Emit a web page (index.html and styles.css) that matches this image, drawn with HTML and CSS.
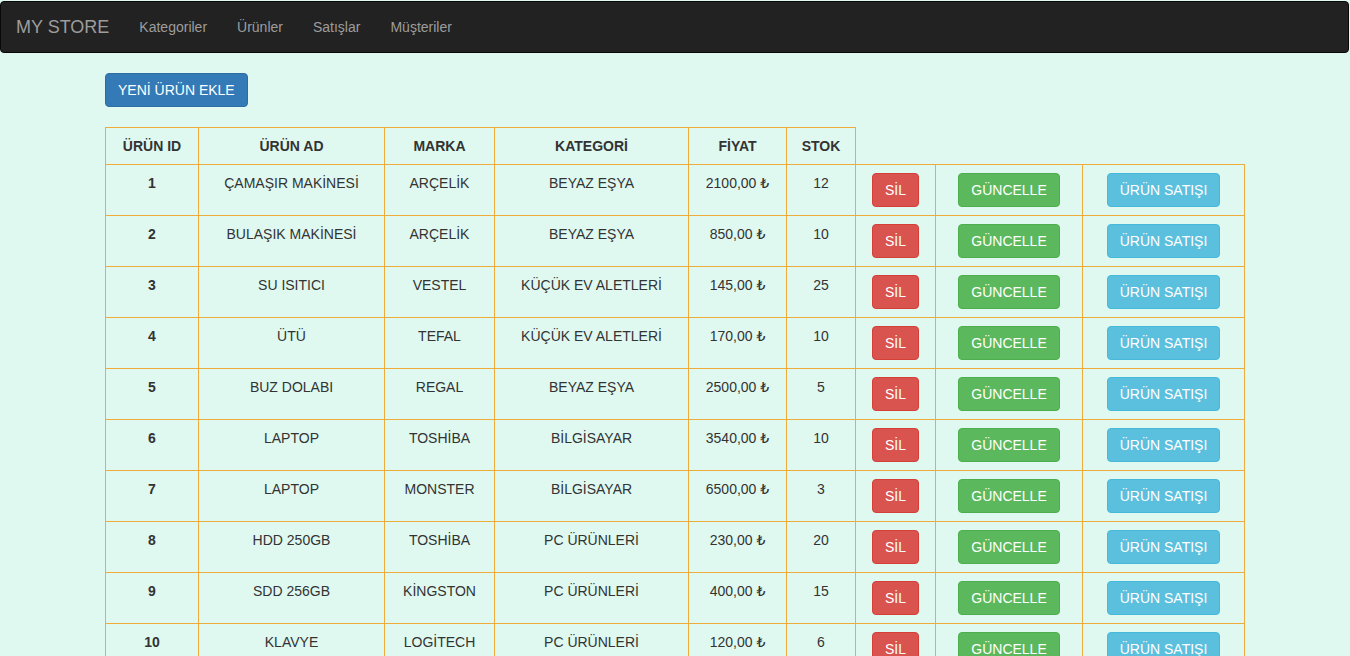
FILE: index.html
```html
<!DOCTYPE html>
<html lang="tr">
<head>
<meta charset="utf-8">
<title>MY STORE</title>
<link rel="stylesheet" href="styles.css">
</head>
<body>
<nav class="navbar">
  <a class="brand" href="#">MY STORE</a>
  <ul class="nav-links">
    <li><a href="#">Kategoriler</a></li>
    <li><a href="#">Ürünler</a></li>
    <li><a href="#">Satışlar</a></li>
    <li><a href="#">Müşteriler</a></li>
  </ul>
</nav>
<main class="container">
  <a class="btn btn-primary" href="#">YENİ ÜRÜN EKLE</a>
  <table class="products">
    <colgroup>
      <col class="c-id"><col class="c-ad"><col class="c-marka"><col class="c-kat"><col class="c-fiyat"><col class="c-stok"><col class="c-sil"><col class="c-gun"><col class="c-sat">
    </colgroup>
    <thead>
      <tr><th>ÜRÜN ID</th><th>ÜRÜN AD</th><th>MARKA</th><th>KATEGORİ</th><th>FİYAT</th><th>STOK</th></tr>
    </thead>
    <tbody>
      <tr><th>1</th><td>ÇAMAŞIR MAKİNESİ</td><td>ARÇELİK</td><td>BEYAZ EŞYA</td><td>2100,00 ₺</td><td>12</td><td><a class="btn btn-danger" href="#">SİL</a></td><td><a class="btn btn-success" href="#">GÜNCELLE</a></td><td><a class="btn btn-info" href="#">ÜRÜN SATIŞI</a></td></tr>
      <tr><th>2</th><td>BULAŞIK MAKİNESİ</td><td>ARÇELİK</td><td>BEYAZ EŞYA</td><td>850,00 ₺</td><td>10</td><td><a class="btn btn-danger" href="#">SİL</a></td><td><a class="btn btn-success" href="#">GÜNCELLE</a></td><td><a class="btn btn-info" href="#">ÜRÜN SATIŞI</a></td></tr>
      <tr><th>3</th><td>SU ISITICI</td><td>VESTEL</td><td>KÜÇÜK EV ALETLERİ</td><td>145,00 ₺</td><td>25</td><td><a class="btn btn-danger" href="#">SİL</a></td><td><a class="btn btn-success" href="#">GÜNCELLE</a></td><td><a class="btn btn-info" href="#">ÜRÜN SATIŞI</a></td></tr>
      <tr><th>4</th><td>ÜTÜ</td><td>TEFAL</td><td>KÜÇÜK EV ALETLERİ</td><td>170,00 ₺</td><td>10</td><td><a class="btn btn-danger" href="#">SİL</a></td><td><a class="btn btn-success" href="#">GÜNCELLE</a></td><td><a class="btn btn-info" href="#">ÜRÜN SATIŞI</a></td></tr>
      <tr><th>5</th><td>BUZ DOLABI</td><td>REGAL</td><td>BEYAZ EŞYA</td><td>2500,00 ₺</td><td>5</td><td><a class="btn btn-danger" href="#">SİL</a></td><td><a class="btn btn-success" href="#">GÜNCELLE</a></td><td><a class="btn btn-info" href="#">ÜRÜN SATIŞI</a></td></tr>
      <tr><th>6</th><td>LAPTOP</td><td>TOSHİBA</td><td>BİLGİSAYAR</td><td>3540,00 ₺</td><td>10</td><td><a class="btn btn-danger" href="#">SİL</a></td><td><a class="btn btn-success" href="#">GÜNCELLE</a></td><td><a class="btn btn-info" href="#">ÜRÜN SATIŞI</a></td></tr>
      <tr><th>7</th><td>LAPTOP</td><td>MONSTER</td><td>BİLGİSAYAR</td><td>6500,00 ₺</td><td>3</td><td><a class="btn btn-danger" href="#">SİL</a></td><td><a class="btn btn-success" href="#">GÜNCELLE</a></td><td><a class="btn btn-info" href="#">ÜRÜN SATIŞI</a></td></tr>
      <tr><th>8</th><td>HDD 250GB</td><td>TOSHİBA</td><td>PC ÜRÜNLERİ</td><td>230,00 ₺</td><td>20</td><td><a class="btn btn-danger" href="#">SİL</a></td><td><a class="btn btn-success" href="#">GÜNCELLE</a></td><td><a class="btn btn-info" href="#">ÜRÜN SATIŞI</a></td></tr>
      <tr><th>9</th><td>SDD 256GB</td><td>KİNGSTON</td><td>PC ÜRÜNLERİ</td><td>400,00 ₺</td><td>15</td><td><a class="btn btn-danger" href="#">SİL</a></td><td><a class="btn btn-success" href="#">GÜNCELLE</a></td><td><a class="btn btn-info" href="#">ÜRÜN SATIŞI</a></td></tr>
      <tr><th>10</th><td>KLAVYE</td><td>LOGİTECH</td><td>PC ÜRÜNLERİ</td><td>120,00 ₺</td><td>6</td><td><a class="btn btn-danger" href="#">SİL</a></td><td><a class="btn btn-success" href="#">GÜNCELLE</a></td><td><a class="btn btn-info" href="#">ÜRÜN SATIŞI</a></td></tr>
    </tbody>
  </table>
</main>
</body>
</html>
```
FILE: styles.css
```css
* { box-sizing: border-box; }
html, body {
  margin: 0;
  background: #dff9f1;
}
body {
  padding-top: 1px;
  font-family: "Liberation Sans", Arial, "DejaVu Sans", sans-serif;
  font-size: 14px;
  line-height: 1.42857143;
  color: #333;
}
a { text-decoration: none; }

.navbar {
  display: flex;
  align-items: stretch;
  height: 52px;
  margin: 0 1px 20px 0;
  padding: 0 15px 0 0;
  background: #222;
  border: 1px solid #080808;
  border-radius: 4px;
}
.brand {
  padding: 15px;
  font-size: 18px;
  line-height: 20px;
  color: #9d9d9d;
}
.nav-links {
  display: flex;
  margin: 0;
  padding: 0;
  list-style: none;
}
.nav-links a {
  display: block;
  padding: 15px;
  line-height: 20px;
  color: #9d9d9d;
}

.container {
  width: 1170px;
  margin: 0 auto;
  padding: 0 15px;
}

.btn {
  display: inline-block;
  padding: 6px 12px;
  font-size: 14px;
  line-height: 1.42857143;
  text-align: center;
  white-space: nowrap;
  color: #fff;
  border: 1px solid transparent;
  border-radius: 4px;
}
.btn-primary { background: #337ab7; border-color: #2e6da4; }
.btn-danger { background: #d9534f; border-color: #d43f3a; }
.btn-success { background: #5cb85c; border-color: #4cae4c; }
.btn-info { background: #5bc0de; border-color: #46b8da; }

.products {
  width: 1139px;
  margin-top: 20px;
  border-collapse: collapse;
  table-layout: fixed;
}
.products th,
.products td {
  padding: 8px;
  border: 1px solid #eeac3c;
  text-align: center;
  vertical-align: top;
  line-height: 1.42857143;
}
.products th { font-weight: bold; }
.c-id { width: 93px; }
.c-ad { width: 186px; }
.c-marka { width: 110px; }
.c-kat { width: 194px; }
.c-fiyat { width: 98px; }
.c-stok { width: 69px; }
.c-sil { width: 80px; }
.c-gun { width: 147px; }
.c-sat { width: 162px; }
```
